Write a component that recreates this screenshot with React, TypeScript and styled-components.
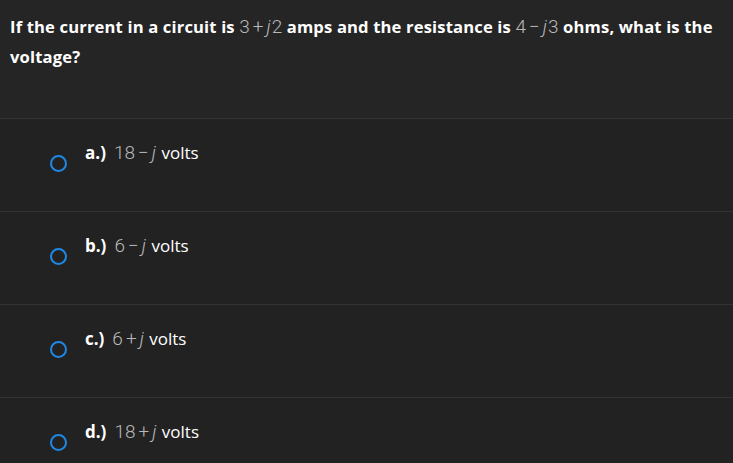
import React from "react"
import styled, { createGlobalStyle } from "styled-components"

const Global = createGlobalStyle`
  html, body {
    margin: 0;
    padding: 0;
    background: #222222;
  }
  body {
    font-family: "Open Sans", "Liberation Sans", sans-serif;
  }
`

const Page = styled.div`
  width: 733px;
  height: 463px;
  overflow: hidden;
  background: #222222;
  color: #ffffff;
`

const Question = styled.div`
  background: #252525;
  height: 119px;
  box-sizing: border-box;
  padding: 12px 10px 0 10px;
  font-size: 16.6px;
  font-weight: 700;
  line-height: 30px;
  letter-spacing: 0.15px;
  border-bottom: 1px solid #333333;
`

const Math = styled.span`
  font-family: "Roboto", "Liberation Sans", sans-serif;
  font-weight: 300;
  color: #b8b8b8;
  font-size: 19px;
  letter-spacing: 0;
`

const Op = styled.span`
  margin: 0 3px;
`

const J = styled.i`
  font-style: italic;
  margin-right: 1px;
`

const Option = styled.div`
  display: flex;
  align-items: flex-start;
  height: 93px;
  box-sizing: border-box;
  padding: 22px 0 0 50px;
  border-bottom: 1px solid #333333;
  &:last-child {
    border-bottom: none;
  }
`

const Radio = styled.span`
  width: 17px;
  height: 17px;
  box-sizing: border-box;
  border: 2px solid #1e88e5;
  border-radius: 50%;
  margin-top: 14px;
  margin-right: 18px;
  flex-shrink: 0;
`

const Label = styled.div`
  font-size: 17px;
  line-height: 24px;
`

const Letter = styled.b`
  font-weight: 700;
  margin-right: 8px;
`

const options = [
  { key: "a", num: "18", op: "−" },
  { key: "b", num: "6", op: "−" },
  { key: "c", num: "6", op: "+" },
  { key: "d", num: "18", op: "+" },
]

export default function App() {
  return (
    <Page>
      <Global />
      <Question>
        If the current in a circuit is{" "}
        <Math>
          3<Op>+</Op><J>j</J>2
        </Math>{" "}
        amps and the resistance is{" "}
        <Math>
          4<Op>−</Op><J>j</J>3
        </Math>{" "}
        ohms, what is the voltage?
      </Question>
      {options.map((o) => (
        <Option key={o.key}>
          <Radio />
          <Label>
            <Letter>{o.key}.)</Letter>
            <Math>
              {o.num}<Op>{o.op}</Op><J>j</J>
            </Math>{" "}
            volts
          </Label>
        </Option>
      ))}
    </Page>
  )
}
